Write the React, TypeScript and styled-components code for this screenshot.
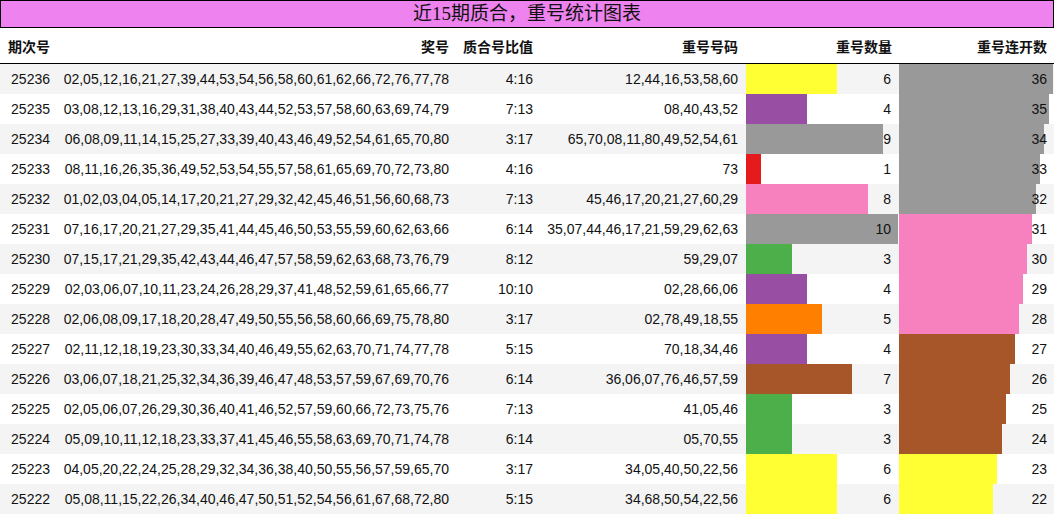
import React from "react";
import styled, { createGlobalStyle } from "styled-components";

const Global = createGlobalStyle`
  html, body { margin: 0; padding: 0; background: #fff; }
  body { font-family: "Liberation Sans", Arial, "Noto Sans CJK SC", sans-serif; font-size: 14px; color: #111; }
`;

const Page = styled.div`width: 1054px;`;

const Title = styled.div`
  height: 26px;
  border: 1px solid #000;
  background: #ee82ee;
  font-family: "Liberation Serif", "Noto Sans CJK SC", serif;
  font-size: 19px;
  line-height: 26px;
  text-align: center;
  color: #111;
`;

const cols = "57px 398px 85px 205px 153px 156px";

const HeadRow = styled.div`
  display: grid;
  grid-template-columns: ${cols};
  height: 35px;
  border-bottom: 1px solid #000;
  font-weight: bold;
  font-family: "Liberation Sans", "Noto Sans CJK SC", sans-serif;
`;

const Row = styled.div<{ $alt: boolean }>`
  display: grid;
  grid-template-columns: ${cols};
  height: 30px;
  background: ${(p) => (p.$alt ? "#f4f4f4" : "#fff")};
`;

const Cell = styled.div<{ $left?: boolean; $pr?: number }>`
  display: flex;
  align-items: center;
  justify-content: ${(p) => (p.$left ? "flex-start" : "flex-end")};
  padding: ${(p) => (p.$left ? "0 0 0 8px" : `0 ${p.$pr ?? 6}px 0 0`)};
  white-space: nowrap;
  position: relative;
`;

const BarCell = styled(Cell)`
  padding-right: 7px;
`;

const Bar = styled.div<{ $color: string }>`
  position: absolute;
  left: 1px;
  top: 0;
  bottom: 0;
  background: ${(p) => p.$color};
`;

const Num = styled.span`position: relative;`;

const C = {
  red: "#e41a1c", green: "#4daf4a", purple: "#984ea3", orange: "#ff7f00",
  yellow: "#ffff33", brown: "#a65628", pink: "#f781bf", gray: "#999999",
};
const countColor: Record<number, string> = {
  1: C.red, 3: C.green, 4: C.purple, 5: C.orange, 6: C.yellow, 7: C.brown, 8: C.pink, 9: C.gray, 10: C.gray,
};
const streakColor = (n: number) => (n >= 32 ? C.gray : n >= 28 ? C.pink : n >= 24 ? C.brown : C.yellow);

const data: [string, string, string, string, number, number][] = [
  ["25236", "02,05,12,16,21,27,39,44,53,54,56,58,60,61,62,66,72,76,77,78", "4:16", "12,44,16,53,58,60", 6, 36],
  ["25235", "03,08,12,13,16,29,31,38,40,43,44,52,53,57,58,60,63,69,74,79", "7:13", "08,40,43,52", 4, 35],
  ["25234", "06,08,09,11,14,15,25,27,33,39,40,43,46,49,52,54,61,65,70,80", "3:17", "65,70,08,11,80,49,52,54,61", 9, 34],
  ["25233", "08,11,16,26,35,36,49,52,53,54,55,57,58,61,65,69,70,72,73,80", "4:16", "73", 1, 33],
  ["25232", "01,02,03,04,05,14,17,20,21,27,29,32,42,45,46,51,56,60,68,73", "7:13", "45,46,17,20,21,27,60,29", 8, 32],
  ["25231", "07,16,17,20,21,27,29,35,41,44,45,46,50,53,55,59,60,62,63,66", "6:14", "35,07,44,46,17,21,59,29,62,63", 10, 31],
  ["25230", "07,15,17,21,29,35,42,43,44,46,47,57,58,59,62,63,68,73,76,79", "8:12", "59,29,07", 3, 30],
  ["25229", "02,03,06,07,10,11,23,24,26,28,29,37,41,48,52,59,61,65,66,77", "10:10", "02,28,66,06", 4, 29],
  ["25228", "02,06,08,09,17,18,20,28,47,49,50,55,56,58,60,66,69,75,78,80", "3:17", "02,78,49,18,55", 5, 28],
  ["25227", "02,11,12,18,19,23,30,33,34,40,46,49,55,62,63,70,71,74,77,78", "5:15", "70,18,34,46", 4, 27],
  ["25226", "03,06,07,18,21,25,32,34,36,39,46,47,48,53,57,59,67,69,70,76", "6:14", "36,06,07,76,46,57,59", 7, 26],
  ["25225", "02,05,06,07,26,29,30,36,40,41,46,52,57,59,60,66,72,73,75,76", "7:13", "41,05,46", 3, 25],
  ["25224", "05,09,10,11,12,18,23,33,37,41,45,46,55,58,63,69,70,71,74,78", "6:14", "05,70,55", 3, 24],
  ["25223", "04,05,20,22,24,25,28,29,32,34,36,38,40,50,55,56,57,59,65,70", "3:17", "34,05,40,50,22,56", 6, 23],
  ["25222", "05,08,11,15,22,26,34,40,46,47,50,51,52,54,56,61,67,68,72,80", "5:15", "34,68,50,54,22,56", 6, 22],
];

export default function App() {
  return (
    <Page>
      <Global />
      <Title>近15期质合，重号统计图表</Title>
      <HeadRow>
        <Cell $left>期次号</Cell>
        <Cell>奖号</Cell>
        <Cell $pr={7}>质合号比值</Cell>
        <Cell $pr={7}>重号号码</Cell>
        <Cell $pr={6}>重号数量</Cell>
        <Cell $pr={7}>重号连开数</Cell>
      </HeadRow>
      {data.map(([id, nums, ratio, rep, cnt, streak], i) => (
        <Row key={id} $alt={i % 2 === 0}>
          <Cell $pr={7}>{id}</Cell>
          <Cell>{nums}</Cell>
          <Cell $pr={7}>{ratio}</Cell>
          <Cell $pr={7}>{rep}</Cell>
          <BarCell>
            <Bar $color={countColor[cnt]} style={{ width: `${(cnt / 10) * 152}px` }} />
            <Num>{cnt}</Num>
          </BarCell>
          <BarCell>
            <Bar $color={streakColor(streak)} style={{ width: `${(streak / 36) * 154}px` }} />
            <Num>{streak}</Num>
          </BarCell>
        </Row>
      ))}
    </Page>
  );
}
